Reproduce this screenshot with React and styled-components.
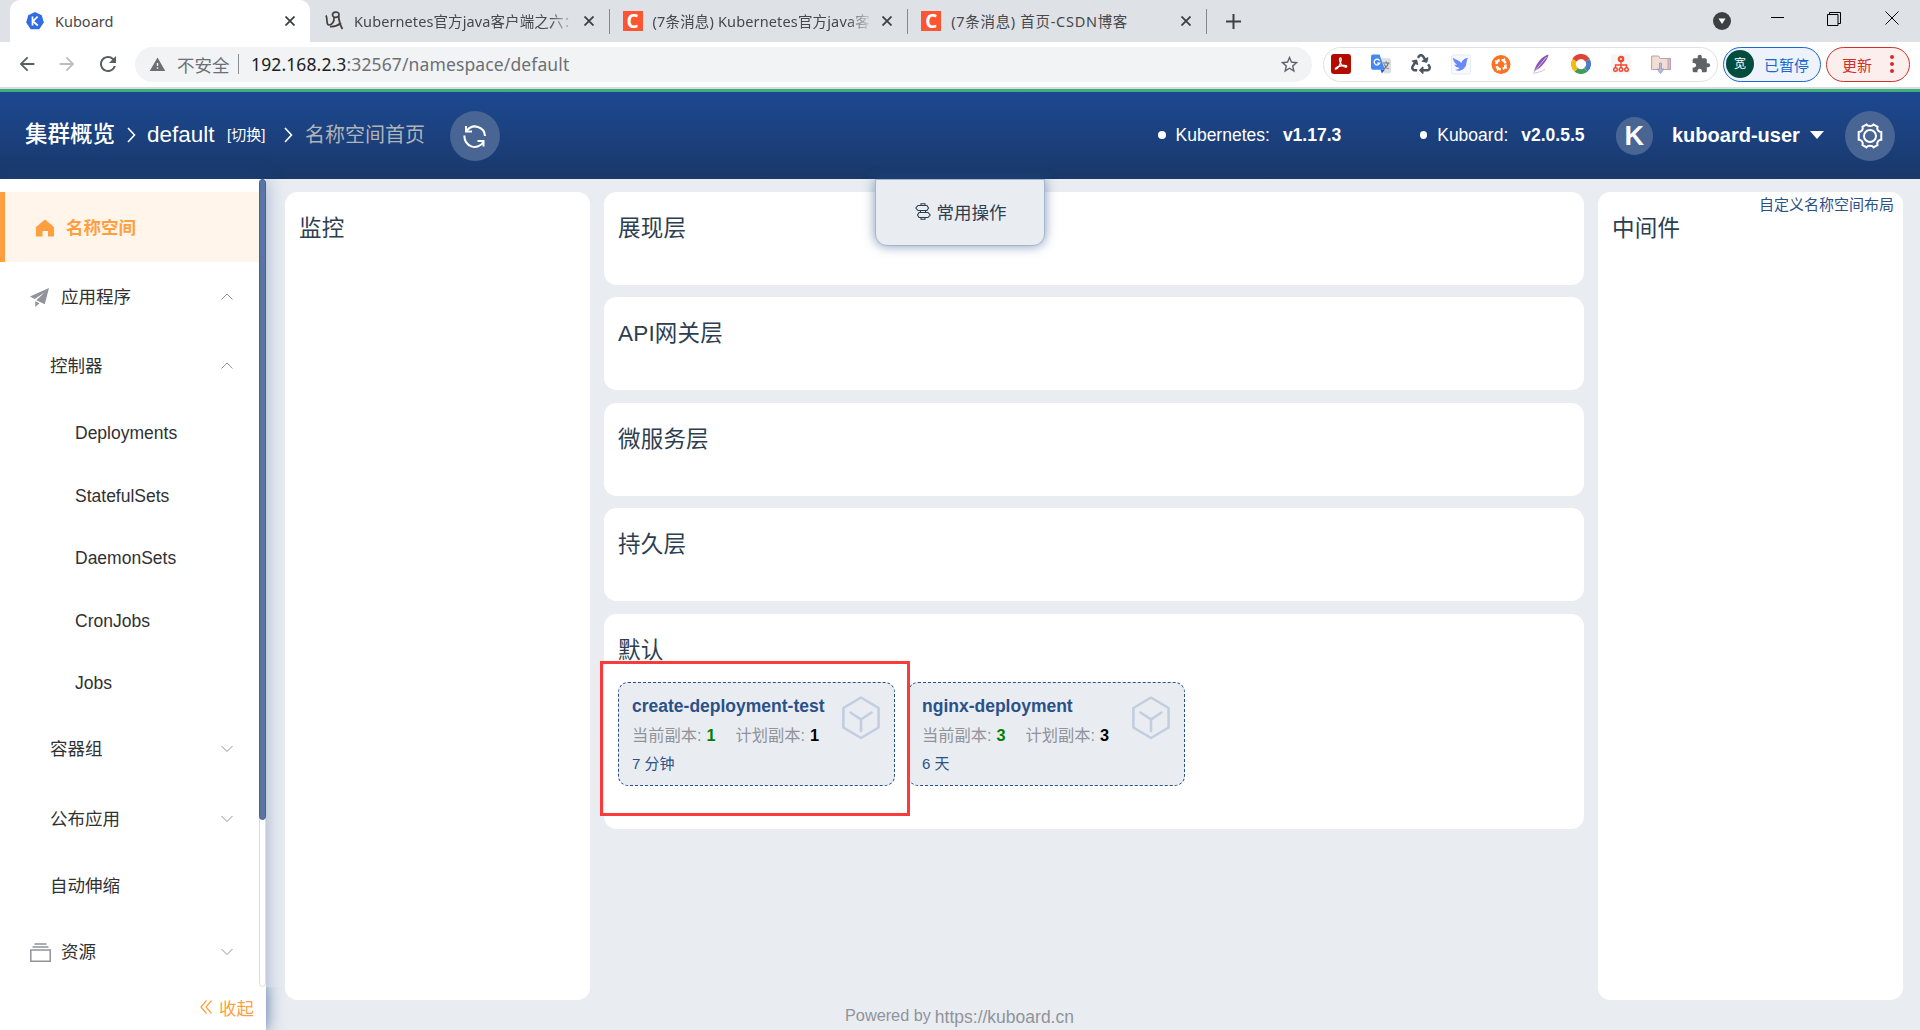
import React, { Component } from 'react';
import styled, { createGlobalStyle } from 'styled-components';
import { MdArrowBack, MdArrowForward, MdRefresh, MdWarning, MdStarBorder, MdExtension } from 'react-icons/md';
import { FaRecycle } from 'react-icons/fa';

const GlobalStyle = createGlobalStyle`
  * {
    box-sizing: border-box;
  }
  body {
    margin: 0;
    overflow: hidden;
    font-family: "Liberation Sans", "Noto Sans CJK SC", sans-serif;
    font-size: 17.5px;
    color: #303133;
  }
  svg {
    display: block;
    flex: none;
  }
`;

const Page = styled.div`
  display: flex;
  flex-direction: column;
  width: 1920px;
  height: 1030px;
  background: #e9edf2;
  overflow: hidden;
`;

/* browser chrome */

const TabStrip = styled.div`
  display: flex;
  height: 42px;
  flex: none;
  padding-left: 10px;
  background: #dee1e6;
  font-family: "Noto Sans", "Noto Sans CJK SC", sans-serif;
`;

const Tab = styled.div`
  display: flex;
  align-items: center;
  width: ${props => (props.$active ? 300 : 298.6)}px;
  padding: 0 14px 0 ${props => (props.$active ? 15 : 14)}px;
  background: ${props => (props.$active ? '#fff' : 'transparent')};
  border-radius: 10px 10px 0 0;
`;

const TabIcon = styled.div`
  display: flex;
  justify-content: center;
  width: 20px;
  margin-right: 10px;
`;

const TabTitle = styled.div`
  flex: 1;
  height: 24px;
  line-height: 24px;
  font-size: 14.5px;
  letter-spacing: ${props => props.$spacing || 0}px;
  color: #45484d;
  white-space: nowrap;
  overflow: hidden;
  ${props => props.$fade && 'mask-image: linear-gradient(90deg, #000 88%, transparent);'}
`;

const TabClose = styled.div`
  display: flex;
  justify-content: center;
  width: 12px;
  margin-left: 8px;
`;

const TabDivider = styled.div`
  width: 1px;
  height: 25px;
  margin: 9px -1px 0 0;
  background: #84888d;
`;

const NewTab = styled.div`
  display: flex;
  align-items: center;
  padding-left: 20px;
`;

const WindowButtons = styled.div`
  display: flex;
  align-items: flex-start;
  margin-left: auto;
  padding: 11px 21px 0 0;
`;

const WindowButton = styled.div`
  margin-left: ${props => props.$gap || 0}px;
  padding-top: ${props => props.$drop || 0}px;
`;

const CsdnLogo = styled.div`
  width: 20px;
  height: 20px;
  background: #fc5531;
  color: #fff;
  font: bold 19px/20px "Open Sans", sans-serif;
  text-align: center;
`;

const Toolbar = styled.div`
  display: flex;
  align-items: center;
  height: 47px;
  flex: none;
  padding: 0 10px 1px 16px;
  background: #fff;
  border-bottom: 2px solid #dadcdd;
  font-family: "Noto Sans", "Noto Sans CJK SC", sans-serif;
`;

const NavButton = styled.div`
  width: 40px;
  color: ${props => (props.$disabled ? '#bcbec0' : '#5a5d61')};
`;

const AddressBar = styled.div`
  display: flex;
  align-items: center;
  width: 1177px;
  height: 35px;
  margin-left: -1px;
  padding: 0 12px 0 14px;
  border-radius: 18px;
  background: #f1f3f4;
  font-size: 17.5px;
  color: #6c7074;
`;

const Insecure = styled.div`
  margin-left: 11px;
  width: 53px;
  white-space: nowrap;
`;

const AddressDivider = styled.div`
  width: 1px;
  height: 20px;
  margin: 0 12px 0 8px;
  background: #8b8f93;
`;

const Url = styled.div`
  flex: 1;
  letter-spacing: 0.12px;
`;

const Host = styled.span`
  color: #202124;
`;

const Extensions = styled.div`
  display: flex;
  align-items: center;
  justify-content: space-between;
  width: 395px;
  height: 35px;
  margin-left: 11px;
  padding: 0 6px 0 7px;
  border: 1px solid #dfe1e5;
  border-radius: 18px;

  > svg {
    width: 20px;
  }
`;

const Pill = styled.div`
  display: flex;
  align-items: center;
  justify-content: space-between;
  width: ${props => props.$width}px;
  height: 35px;
  margin-left: 5px;
  padding: ${props => props.$padding};
  border: 1px solid ${props => props.$color};
  border-radius: 18px;
  background: ${props => props.$background};
  color: ${props => props.$color};
  font-size: 15px;
`;

const ProfileBadge = styled.div`
  width: 28px;
  height: 28px;
  border-radius: 50%;
  background: #004d40;
  color: #fff;
  font-size: 12px;
  line-height: 27px;
  text-align: center;
`;

/* kuboard header */

const Header = styled.div`
  display: flex;
  align-items: center;
  justify-content: space-between;
  height: 90px;
  flex: none;
  padding: 0 25px 1px;
  border-top: 3px solid #3eaf7c;
  background: linear-gradient(#1d4991, #19386a);
  color: #fff;
`;

const HeaderSide = styled.div`
  display: flex;
  align-items: center;
`;

const Crumb = styled.div`
  width: ${props => props.$width}px;
  font-size: ${props => props.$size || 22.5}px;
  line-height: 30px;
  font-weight: ${props => (props.$strong ? 500 : 400)};
  color: ${props => props.$color || '#fff'};
  white-space: nowrap;
`;

const CrumbArrow = styled.div`
  margin: 0 ${props => props.$right}px 0 ${props => props.$left}px;
`;

const RoundButton = styled.div`
  display: flex;
  align-items: center;
  justify-content: center;
  width: ${props => props.$size}px;
  height: ${props => props.$size}px;
  margin: 2px 0 0 ${props => props.$gap}px;
  border-radius: 50%;
  background: #486594;
  font-size: 27px;
  font-weight: bold;
`;

const Version = styled.div`
  display: flex;
  align-items: center;
  width: ${props => props.$width}px;
  font-size: 17.5px;
`;

const VersionDot = styled.div`
  width: 8px;
  height: 8px;
  margin-right: 10px;
  border-radius: 50%;
  background: #fff;
`;

const VersionValue = styled.b`
  margin-left: 13px;
`;

const UserName = styled.div`
  margin: 0 9px 0 19px;
  width: 129px;
  font-size: 20px;
  font-weight: bold;
`;

/* side menu */

const Body = styled.div`
  position: relative;
  display: flex;
  flex: 1;
  min-height: 0;
`;

const Sidebar = styled.div`
  display: flex;
  flex-direction: column;
  width: 266px;
  flex: none;
  background: #fff;
  box-shadow: 0 0 18px rgba(43, 81, 137, 0.4);
`;

const MenuArea = styled.div`
  display: flex;
  height: 808px;
`;

const Menu = styled.div`
  width: 259px;
  padding-top: 13px;
`;

const MenuItem = styled.div`
  display: flex;
  align-items: center;
  height: ${props => (props.$leaf ? 62.5 : 70)}px;
  padding: 0 26px ${props => (props.$indent === 50 && !props.$leaf ? 2 : 0)}px ${props => props.$indent}px;
  color: #303133;
  white-space: nowrap;
  ${props => props.$active && `
    padding-top: 2px;
    padding-left: 31px;
    border-left: 5px solid #ff9f40;
    background: #fff5eb;
    color: #ff9f40;
    font-weight: bold;
  `}
`;

const MenuLabel = styled.div`
  flex: 1;
  line-height: 24px;
`;

const MenuIcon = styled.div`
  width: ${props => props.$width || 31}px;
`;

const ScrollTrack = styled.div`
  width: 7px;
  height: 808px;
  border: 1px solid #dcdcdc;
  border-radius: 4px;
`;

const ScrollThumb = styled.div`
  width: 7px;
  height: 641px;
  margin: -1px 0 0 -1px;
  border: 1px solid #4a6288;
  border-radius: 4px;
  background: #5975a5;
`;

const Collapse = styled.div`
  display: flex;
  align-items: center;
  justify-content: flex-end;
  height: 43px;
  padding: 0 12px 3px 0;
  color: #ff9f40;
  box-shadow: 0 0 12px rgba(43, 81, 137, 0.5);
  clip-path: inset(0 -24px 0 0);
`;

const CollapseLabel = styled.div`
  margin-left: 7px;
`;

/* namespace content */

const Main = styled.div`
  display: flex;
  flex: 1;
  flex-direction: column;
  padding: 13px 17px 0 19px;
`;

const Columns = styled.div`
  display: flex;
  height: 808px;
  gap: 14px;
`;

const Panel = styled.div`
  width: ${props => props.$width}px;
  height: ${props => props.$height || 808}px;
  padding: 21px 14px 0;
  border-radius: 12.5px;
  background: #fff;
`;

const Layers = styled.div`
  display: flex;
  flex-direction: column;
  width: 980px;
  gap: 12.4px;
`;

const PanelTitle = styled.div`
  font-size: 22.5px;
  line-height: 32px;
  letter-spacing: 0.2px;
  color: #2c3e50;
`;

const PanelHead = styled.div`
  display: flex;
  flex-direction: column;
  margin-top: -18px;
`;

const LayoutLink = styled.div`
  align-self: flex-end;
  margin: 0 -5px -2px 0;
  font-size: 15px;
  line-height: 20px;
  color: #2b5189;
`;

const Workloads = styled.div`
  display: flex;
  gap: 13px;
  margin-top: 15px;
`;

const WorkloadCard = styled.div`
  display: flex;
  justify-content: space-between;
  width: 277px;
  height: 104px;
  padding: 11px 14px 0 13px;
  border: 1px dashed #2b5189;
  border-radius: 10px;
  background: #e9edf2;
`;

const CardIcon = styled.div`
  margin-top: 2px;
`;

const WorkloadInfo = styled.div`
  white-space: nowrap;
`;

const WorkloadName = styled.div`
  font-size: 17.5px;
  line-height: 24px;
  font-weight: bold;
  color: #2b5189;
`;

const Replicas = styled.div`
  display: flex;
  gap: 20px;
  margin-top: 4px;
  font-size: 16.25px;
  line-height: 26px;
  color: #909399;
`;

const Count = styled.b`
  margin-left: 5px;
  color: ${props => props.$color};
`;

const Age = styled.div`
  margin-top: 3px;
  font-size: 15px;
  line-height: 26px;
  color: #2b5189;
`;

const PoweredBy = styled.div`
  display: flex;
  justify-content: center;
  gap: 4px;
  margin: 5px 269px 0 0;
  font-size: 16.25px;
  line-height: 20px;
  color: #909399;
`;

const PoweredLink = styled.div`
  margin-top: 2px;
  font-size: 17.5px;
`;

const CommonActions = styled.div`
  position: absolute;
  top: 0;
  left: 875px;
  display: flex;
  align-items: center;
  justify-content: center;
  gap: 6px;
  width: 170px;
  height: 67px;
  padding: 0 0 3px 1px;
  border: 1px solid #a6b5cf;
  border-radius: 0 0 12px 12px;
  background: #e9edf2;
  box-shadow: 0 0 12px rgba(43, 81, 137, 0.6);
  color: #2c3e50;
`;

/* the red frame drawn over the first workload */
const Highlight = styled.div`
  position: absolute;
  top: 482px;
  left: 600px;
  width: 310px;
  height: 155px;
  border: 3px solid #fb3a3c;
`;

const CloseIcon = () => (
  <svg width="10" height="10" viewBox="0 0 10 10" stroke="#3c4043" strokeWidth="1.8">
    <path d="M0.5 0.5l9 9M9.5 0.5l-9 9" />
  </svg>
);

const KuboardIcon = () => (
  <svg width="18" height="18" viewBox="0 0 18 18">
    <path d="M9 0l6.8 3.2L17.8 10.5 13.3 17.2H4.7L0.2 10.5 2.2 3.2z" fill="#326ce5" />
    <path d="M6.5 4.5v9M11.6 4.7L7 9.2l4.8 4.3" stroke="#fff" strokeWidth="1.7" fill="none" />
  </svg>
);

const InkIcon = () => (
  <svg width="18" height="20" viewBox="0 0 18 20" fill="none" stroke="#45413e">
    <path d="M.8 4.500c2 1.500 0 9.500 3 9.500C7 14 9.500 10.500 9 6.500M7.500 4c0-3.500 6.500-4 6.500-.5S8 7.500 7.500 4z" strokeWidth="1.7" />
    <path d="M13.500 5c.5 4 1.500 9 4 13M5 15.500c4 .5 8-1 11-3.500" strokeWidth="1.9" />
  </svg>
);

const Chevron = ({ up }) => (
  <svg width="12" height="8" viewBox="0 0 12 8" fill="none" stroke="#909399" strokeWidth="1">
    <path d={up ? 'M0.5 6.500L6 1l5.500 5.500' : 'M0.5 1L6 6.500 11.500 1'} />
  </svg>
);

const CrumbChevron = () => (
  <svg width="9" height="16" viewBox="0 0 9 16" fill="none" stroke="#fff" strokeWidth="1.6">
    <path d="M1 1l6.500 7L1 15" />
  </svg>
);

const RefreshIcon = () => (
  <svg width="24" height="24" viewBox="0 0 24 24" fill="none" stroke="#fff" strokeWidth="2">
    <path d="M4 6.500A10 10 0 0 1 22 12M1.500 11.500A10.300 10.300 0 0 0 20.500 18" />
    <path d="M3 2v5.500h6M14.500 17h6v5.500" />
  </svg>
);

const GearIcon = () => (
  <svg width="28" height="28" viewBox="0 0 28 28" fill="none" stroke="#fff" strokeWidth="2">
    <path d="M10.500 2.500c1.200 2 5.800 2 7 0l4 2.300c-1 2.400 1 5.200 3.800 5.200v7.800c-2.800 0-4.800 2.600-3.800 5.200l-4 2.300c-1.200-2-5.800-2-7 0l-4-2.300c1-2.600-1-5.200-3.800-5.200V10c2.800 0 4.800-2.800 3.800-5.200z" />
    <circle cx="14" cy="14" r="6" />
  </svg>
);

const HomeIcon = () => (
  <svg width="18" height="18" viewBox="0 0 18 18" fill="#ff9f40">
    <path d="M9 0.500l9 7.500v9.500h-6V12H6.500v5.500H0V8z" />
  </svg>
);

const PlaneIcon = () => (
  <svg width="19" height="19" viewBox="0 0 18 18" fill="#909399">
    <path d="M18 0L0 8l4.500 2.500L14 4 6 11.500l8 4z" />
    <path d="M5 12.500V18l4-3.500z" />
  </svg>
);

const ResourceIcon = () => (
  <svg width="21" height="19" viewBox="0 0 21 19" fill="none" stroke="#909399" strokeWidth="1.500">
    <path d="M4.500 1h12M2.500 4h16M.8 7h19.400v11.200H.8z" />
  </svg>
);

const CubeIcon = () => (
  <svg width="38" height="44" viewBox="0 0 38 44" fill="none" stroke="#c2cee0" strokeWidth="2.600" strokeLinejoin="round">
    <path d="M19 1.500l17.600 10.500v19.500L19 42 1.400 31.500V12z" />
    <path d="M8.500 16.500L19 23.500l10.500-7M19 23v12" strokeLinecap="round" />
  </svg>
);

const GuideIcon = () => (
  <svg width="16" height="17" viewBox="0 0 16 17" fill="none" stroke="#2c3e50" strokeWidth="1.1">
    <path d="M6 2.500V.8h4v1.700M3 2.500h9l1.500 2.500L12 7.500H3L.8 5zM4 9.500h9l2.200 2.500-2.200 2.500H4L2.500 12zM5.500 7.500v2M10.500 7.500v2M6 14.500v1.700h4v-1.700" />
  </svg>
);

const ExtensionIcons = () => (
  <>
    <svg width="20" height="20" viewBox="0 0 20 20">
      <rect width="20" height="20" rx="3" fill="#b30b00" />
      <path d="M4.500 15.200c-1-1 2-3 7-3.700s5 1.500 3 1.500c-2.500 0-6-4-6-7.500 0-2.300 2-2 1.700.5C9.800 9 7 15.500 4.500 15.200z" fill="none" stroke="#fff" strokeWidth="1.3" />
    </svg>
    <svg width="21" height="20" viewBox="0 0 21 20">
      <path d="M9 4h10q2 0 2 2v12q0 2-2 2h-5z" fill="#dcdfe3" />
      <path d="M2 0h7l5.500 16H2q-2 0-2-2V2q0-2 2-2z" fill="#4688f1" />
      <path d="M10 16h4.500L11.500 20z" fill="#3457b8" />
      <path d="M9 6.500A3 3 0 1 0 9.200 9H6.500" stroke="#fff" strokeWidth="1.4" fill="none" />
      <path d="M12.500 9h7M16 7.500V9M18 9c-.5 3-2.500 5-4.500 6M14 10.500c1 2.500 3 4 4.500 4.500" stroke="#6b737c" strokeWidth="1.100" fill="none" />
    </svg>
    <FaRecycle size={20} color="#4c5661" />
    <svg width="21" height="21" viewBox="0 0 21 21">
      <rect x=".5" y=".5" width="20" height="20" rx="2" fill="#f8f9ff" stroke="#e5e8f5" />
      <path d="M2 3.500c3.500 2.500 7 2.800 9 5.500.5-3 3.500-5 7.500-5.500-2 1.500-1.600 3-2.500 7-.8 3.500-4 6-7.500 6.500-1.500.2-3-.2-4-1 2.500 0 4-.7 4.500-2-3-.3-5-1.500-5.500-3.500 1 .3 2 .2 2.800 0C4 9.500 2 6.500 2 3.500z" fill="#6b88fb" />
    </svg>
    <svg width="19" height="19" viewBox="0 0 19 19" fill="none" stroke="#fff">
      <circle cx="9.500" cy="9.500" r="9.500" fill="#fa7323" stroke="none" />
      <circle cx="9.500" cy="9.500" r="4.700" strokeWidth="2.400" strokeDasharray="5.400 2" />
      <path d="M3.500 5.500l2 1.500M13.500 3.500L12 5.500M15.500 13.500l-2-1.500M5.500 15.500L7 13.500" strokeWidth="1.500" />
    </svg>
    <svg width="18" height="20" viewBox="0 0 18 20">
      <path d="M2 17.500C4 9.500 9 3 16.500 0.500 15.500 6 10 13.500 2 17.500z" fill="#8d55b8" />
      <path d="M1 19.200c4-.5 9-1.500 12-4M2 18L14.500 3" stroke="#d3bedf" fill="none" />
    </svg>
    <svg width="20" height="20" viewBox="0 0 20 20" fill="none" strokeWidth="5">
      <path d="M3.500 6.200A7.500 7.500 0 0 1 16.500 6.200" stroke="#db4437" />
      <path d="M16.500 6.200A7.500 7.500 0 0 1 14.800 15.800" stroke="#4a7dc5" />
      <path d="M14.800 15.800A7.500 7.500 0 0 1 5.200 15.800" stroke="#3f9d58" />
      <path d="M5.200 15.800A7.500 7.500 0 0 1 3.500 6.200" stroke="#f4b912" />
    </svg>
    <svg width="20" height="20" viewBox="0 0 20 20" fill="none" stroke="#f2462f" strokeWidth="1.400">
      <rect width="20" height="20" rx="2" fill="#f6f6f6" stroke="none" />
      <circle cx="10" cy="5" r="2.200" strokeWidth="2.200" />
      <path d="M10 8v6M4.500 14v-3h11v3" />
      <circle cx="4.500" cy="15.500" r="1.800" />
      <circle cx="10" cy="15.500" r="1.800" />
      <circle cx="15.500" cy="15.500" r="1.800" />
    </svg>
    <svg width="20" height="20" viewBox="0 0 20 20">
      <path d="M.6 2h7l1.500 2.500h10.300v11H.6z" fill="#f0dfd2" stroke="#baa0ae" />
      <path d="M17 4.500v11h2.400v-11z" fill="#d9bfd0" stroke="#baa0ae" />
      <path d="M8.500 9h2v6h2.500l-3.500 4.500L6 15h2.500z" fill="#b2b9dc" stroke="#9098c4" strokeWidth=".8" />
    </svg>
    <MdExtension size={22} color="#5f6368" />
  </>
);

const tabs = [
  { title: 'Kuboard', icon: <KuboardIcon />, active: true },
  { title: 'Kubernetes官方java客户端之六：', icon: <InkIcon />, fade: true, spacing: 0.1 },
  { title: '(7条消息) Kubernetes官方java客', icon: <CsdnLogo>C</CsdnLogo>, fade: true, spacing: 0.15 },
  { title: '(7条消息) 首页-CSDN博客', icon: <CsdnLogo>C</CsdnLogo>, spacing: 0.7 },
];

const menu = [
  { label: '名称空间', icon: <HomeIcon />, iconWidth: 30, active: true },
  { label: '应用程序', icon: <PlaneIcon />, indent: 30, arrow: 'up' },
  { label: '控制器', indent: 50, arrow: 'up' },
  { label: 'Deployments', indent: 75, leaf: true },
  { label: 'StatefulSets', indent: 75, leaf: true },
  { label: 'DaemonSets', indent: 75, leaf: true },
  { label: 'CronJobs', indent: 75, leaf: true },
  { label: 'Jobs', indent: 75, leaf: true },
  { label: '容器组', indent: 50, arrow: 'down' },
  { label: '公布应用', indent: 50, arrow: 'down' },
  { label: '自动伸缩', indent: 50, leaf: true },
  { label: '资源', icon: <ResourceIcon />, indent: 30, arrow: 'down' },
];

const workloads = [
  { name: 'create-deployment-test', current: 1, planned: 1, age: '7 分钟' },
  { name: 'nginx-deployment', current: 3, planned: 3, age: '6 天' },
];

class BrowserChrome extends Component {
  render() {
    return (
      <>
        <TabStrip>
          {tabs.map((tab, i) => (
            <React.Fragment key={tab.title}>
              <Tab $active={tab.active}>
                <TabIcon>{tab.icon}</TabIcon>
                <TabTitle $fade={tab.fade} $spacing={tab.spacing}>{tab.title}</TabTitle>
                <TabClose><CloseIcon /></TabClose>
              </Tab>
              {i > 0 && <TabDivider />}
            </React.Fragment>
          ))}
          <NewTab>
            <svg width="15" height="15" viewBox="0 0 15 15" stroke="#3c4043" strokeWidth="2">
              <path d="M7.500 0v15M0 7.500h15" />
            </svg>
          </NewTab>
          <WindowButtons>
            <WindowButton $drop={1}>
              <svg width="18" height="18" viewBox="0 0 18 18">
                <circle cx="9" cy="9" r="9" fill="#3c4043" />
                <path d="M5.500 6.500h7L9 12z" fill="#fff" />
              </svg>
            </WindowButton>
            <WindowButton $gap={40} $drop={6}>
              <svg width="13" height="1" viewBox="0 0 13 1"><path d="M0 .5h13" stroke="#000" /></svg>
            </WindowButton>
            <WindowButton $gap={43} $drop={1}>
              <svg width="14" height="14" viewBox="0 0 14 14" fill="none" stroke="#000">
                <path d="M.5 2.500h10.500v11H.5zM2.500 2.500v-2h11v11h-2.500" />
              </svg>
            </WindowButton>
            <WindowButton $gap={44}>
              <svg width="14" height="14" viewBox="0 0 14 14" stroke="#000"><path d="M.5.5l13 13M13.500.5l-13 13" /></svg>
            </WindowButton>
          </WindowButtons>
        </TabStrip>
        <Toolbar>
          <NavButton><MdArrowBack size={22} /></NavButton>
          <NavButton $disabled><MdArrowForward size={22} /></NavButton>
          <NavButton><MdRefresh size={24} /></NavButton>
          <AddressBar>
            <MdWarning size={17} />
            <Insecure>不安全</Insecure>
            <AddressDivider />
            <Url><Host>192.168.2.3</Host>:32567/namespace/default</Url>
            <MdStarBorder size={21} color="#5f6368" />
          </AddressBar>
          <Extensions><ExtensionIcons /></Extensions>
          <Pill $width={98} $color="#1967d2" $background="#edf2fb" $padding="0 11px 0 2px">
            <ProfileBadge>宽</ProfileBadge>
            已暂停
          </Pill>
          <Pill $width={84} $color="#d03027" $background="#fceeed" $padding="0 15px">
            更新
            <svg width="4" height="18" viewBox="0 0 4 18" fill="#d03027">
              <circle cx="2" cy="2" r="2" />
              <circle cx="2" cy="9" r="2" />
              <circle cx="2" cy="16" r="2" />
            </svg>
          </Pill>
        </Toolbar>
      </>
    );
  }
}

class TopBar extends Component {
  render() {
    return (
      <Header>
        <HeaderSide>
          <Crumb $width={90} $strong>集群概览</Crumb>
          <CrumbArrow $left={12} $right={11}><CrumbChevron /></CrumbArrow>
          <Crumb $width={80}>default</Crumb>
          <Crumb $width={38} $size={15}>[切换]</Crumb>
          <CrumbArrow $left={19} $right={12}><CrumbChevron /></CrumbArrow>
          <Crumb $width={120} $size={20} $color="#b0b3b8">名称空间首页</Crumb>
          <RoundButton $size={50} $gap={25}><RefreshIcon /></RoundButton>
        </HeaderSide>
        <HeaderSide>
          <Version $width={262}>
            <VersionDot />Kubernetes:<VersionValue>v1.17.3</VersionValue>
          </Version>
          <Version $width={165}>
            <VersionDot />Kuboard:<VersionValue>v2.0.5.5</VersionValue>
          </Version>
          <RoundButton $size={37.5} $gap={31}>K</RoundButton>
          <UserName>kuboard-user</UserName>
          <svg width="14" height="8" viewBox="0 0 14 8"><path d="M0 0h14L7 8z" fill="#fff" /></svg>
          <RoundButton $size={50} $gap={21}><GearIcon /></RoundButton>
        </HeaderSide>
      </Header>
    );
  }
}

class SideMenu extends Component {
  render() {
    return (
      <Sidebar>
        <MenuArea>
          <Menu>
            {menu.map(item => (
              <MenuItem key={item.label} $indent={item.indent} $leaf={item.leaf} $active={item.active}>
                {item.icon && <MenuIcon $width={item.iconWidth}>{item.icon}</MenuIcon>}
                <MenuLabel>{item.label}</MenuLabel>
                {item.arrow && <Chevron up={item.arrow === 'up'} />}
              </MenuItem>
            ))}
          </Menu>
          <ScrollTrack><ScrollThumb /></ScrollTrack>
        </MenuArea>
        <Collapse>
          <svg width="12" height="14" viewBox="0 0 12 14" fill="none" stroke="#ff9f40" strokeWidth="1.200">
            <path d="M6.500 .5L1 7l5.500 6.500M11.500 .5L6 7l5.500 6.500" />
          </svg>
          <CollapseLabel>收起</CollapseLabel>
        </Collapse>
      </Sidebar>
    );
  }
}

class Workload extends Component {
  render() {
    let { name, current, planned, age } = this.props;
    return (
      <WorkloadCard>
        <WorkloadInfo>
          <WorkloadName>{name}</WorkloadName>
          <Replicas>
            <div>当前副本:<Count $color="#008000">{current}</Count></div>
            <div>计划副本:<Count $color="#000">{planned}</Count></div>
          </Replicas>
          <Age>{age}</Age>
        </WorkloadInfo>
        <CardIcon><CubeIcon /></CardIcon>
      </WorkloadCard>
    );
  }
}

class App extends Component {
  render() {
    return (
      <Page>
        <GlobalStyle />
        <BrowserChrome />
        <TopBar />
        <Body>
          <SideMenu />
          <Main>
            <Columns>
              <Panel $width={305}>
                <PanelTitle>监控</PanelTitle>
              </Panel>
              <Layers>
                {['展现层', 'API网关层', '微服务层', '持久层'].map(title => (
                  <Panel key={title} $width={980} $height={93}>
                    <PanelTitle>{title}</PanelTitle>
                  </Panel>
                ))}
                <Panel $width={980} $height={215}>
                  <PanelTitle>默认</PanelTitle>
                  <Workloads>
                    {workloads.map(item => <Workload key={item.name} {...item} />)}
                  </Workloads>
                </Panel>
              </Layers>
              <Panel $width={305}>
                <PanelHead>
                  <LayoutLink>自定义名称空间布局</LayoutLink>
                  <PanelTitle>中间件</PanelTitle>
                </PanelHead>
              </Panel>
            </Columns>
            <PoweredBy>
              Powered by
              <PoweredLink>https://kuboard.cn</PoweredLink>
            </PoweredBy>
          </Main>
          <CommonActions><GuideIcon />常用操作</CommonActions>
          <Highlight />
        </Body>
      </Page>
    );
  }
}

export default App;
